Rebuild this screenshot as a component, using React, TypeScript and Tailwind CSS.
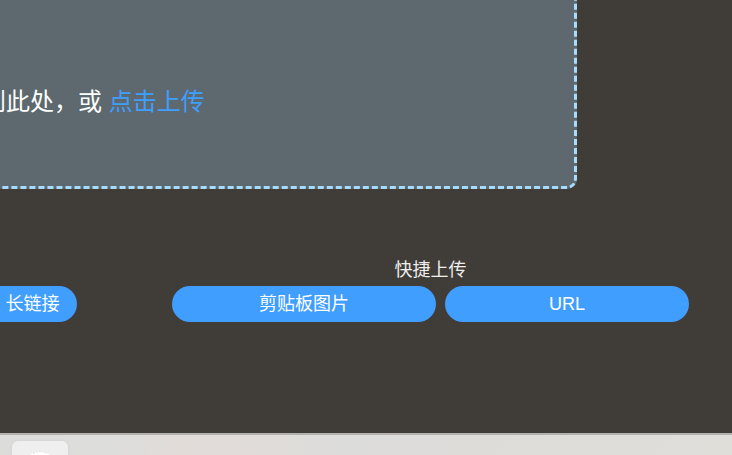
import React from "react";

const pill =
  "h-9 bg-[#409eff] text-lg leading-9 text-white whitespace-nowrap cursor-pointer";

function UploadArea() {
  return (
    <section className="-ml-6 mr-[155px] -mt-6 h-[213px] rounded-[10px] border-[3px] border-dashed border-[#a8dcff] bg-[#5d696e] pt-[105px] pl-[3px]">
      <p className="text-2xl leading-9 text-white whitespace-nowrap">
        到此处，或{" "}
        <a href="#upload" className="text-[#409eff]">
          点击上传
        </a>
      </p>
    </section>
  );
}

function Options() {
  return (
    <section className="mt-[69px] flex items-end justify-between pr-[43px]">
      <button type="button" className={`${pill} w-[77px] shrink-0 rounded-r-full pl-1 pr-4 text-center`}>
        长链接
      </button>
      <div className="ml-[95px] flex-1">
        <h2 className="mb-1 text-center text-lg leading-6 text-[#eeeeee]">快捷上传</h2>
        <div className="flex gap-[9px]">
          <button type="button" className={`${pill} flex-[264_1_0%] rounded-full`}>
            剪贴板图片
          </button>
          <button type="button" className={`${pill} flex-[244_1_0%] rounded-full`}>
            URL
          </button>
        </div>
      </div>
    </section>
  );
}

function Dock() {
  return (
    <footer className="h-[22px] overflow-hidden border-t-2 border-[#b2b1ae] bg-[linear-gradient(to_right,#dcdcdb_0%,#dddddc_16%,#e1dcd8_24%,#e0dcd9_36%,#dcdcdb_48%,#dedcd9_65%,#dfded9_100%)] px-3 pt-1.5">
      <div className="flex h-14 w-14 justify-center rounded-md bg-[#efefef] pt-[10px] shadow-[0_0_3px_#cfcfcf]">
        <svg width="28" height="28" viewBox="0 0 28 28" aria-hidden="true">
          <circle cx="14" cy="14" r="14" fill="#ffffff" />
          <path d="M7 2.5 Q14 -1.5 21 2.5" fill="none" stroke="#d8d8d8" strokeWidth="1" strokeDasharray="2 1" />
        </svg>
      </div>
    </footer>
  );
}

export default function App() {
  return (
    <div className="flex min-h-screen flex-col overflow-hidden bg-[#403c37] font-['Liberation_Sans','Noto_Sans_CJK_SC',sans-serif]">
      <main className="flow-root flex-1 overflow-hidden">
        <UploadArea />
        <Options />
      </main>
      <Dock />
    </div>
  );
}
